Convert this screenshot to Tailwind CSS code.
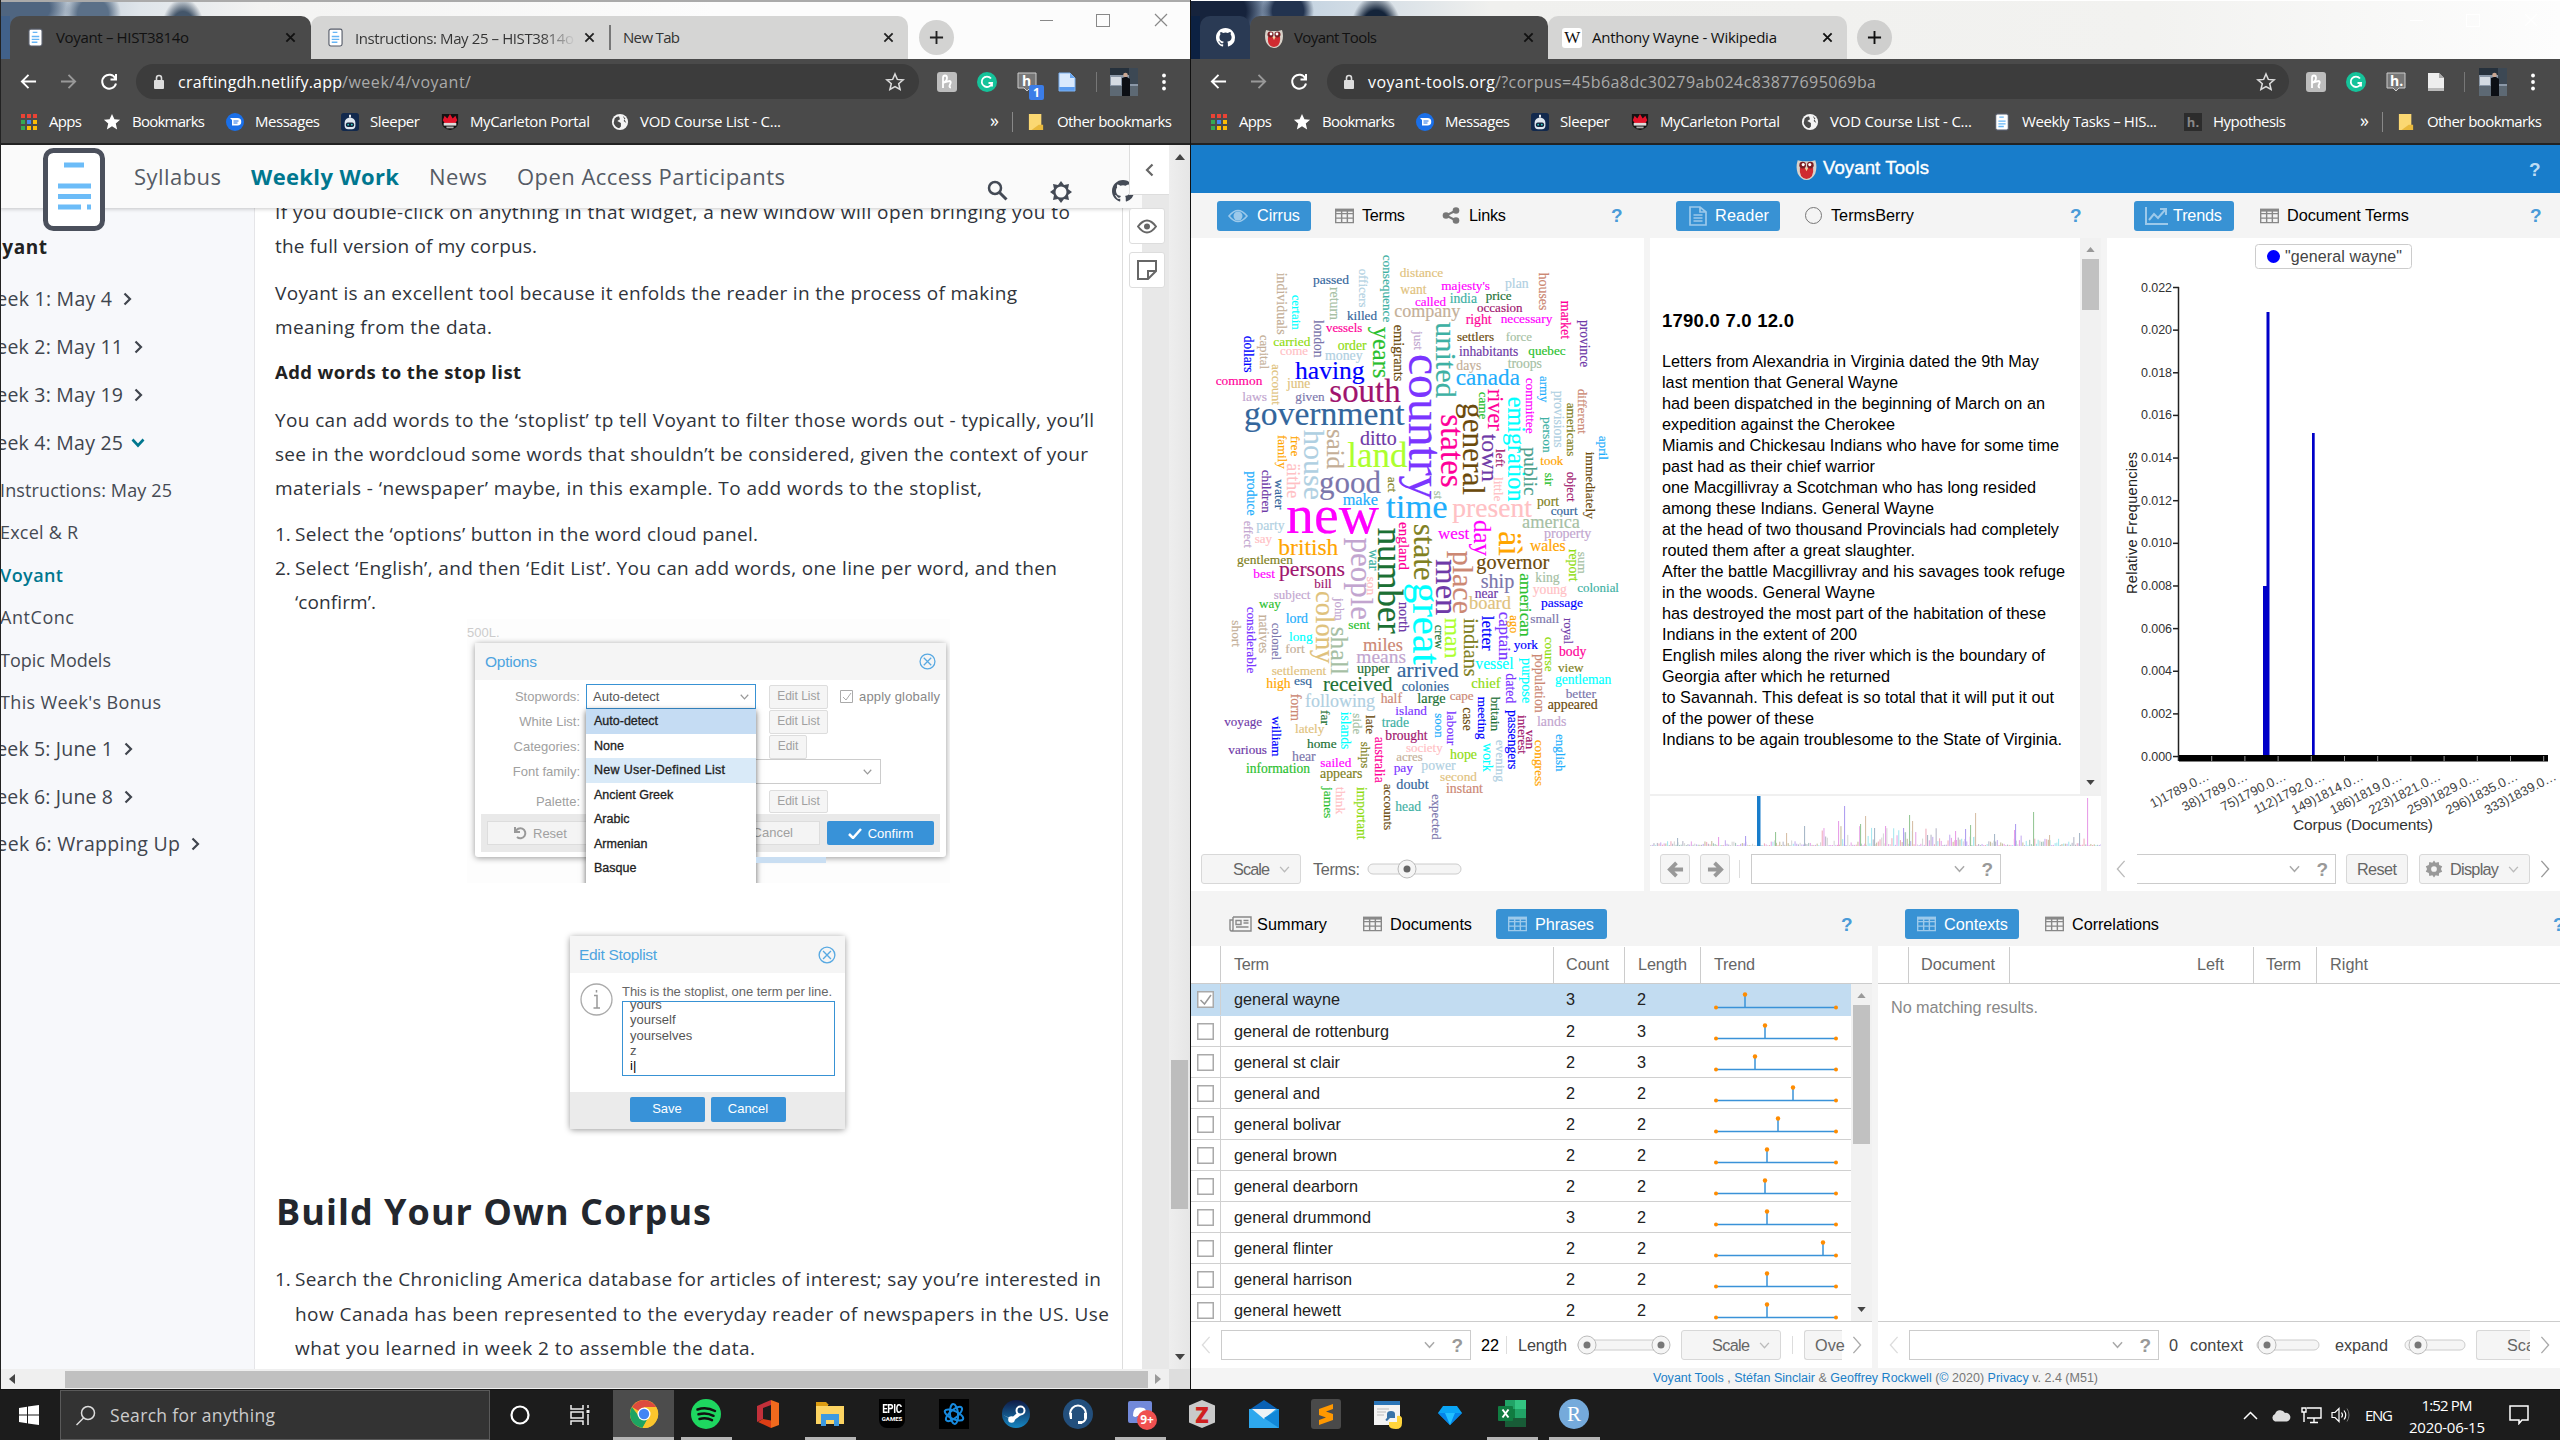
<!DOCTYPE html>
<html lang="en">
<head>
<meta charset="utf-8">
<title>Voyant – HIST3814o</title>
<script src="https://cdn.jsdelivr.net/npm/@tailwindcss/browser@4"></script>
</head>
<body class="w-[2560px] h-[1440px] overflow-hidden bg-[#1c1c1c] flex flex-col font-['Liberation_Sans',sans-serif] leading-none whitespace-nowrap">
<svg class="hidden">
  <symbol id="x" viewBox="0 0 12 12"><path d="M1.5 1.5l9 9M10.5 1.5l-9 9" stroke="currentColor" stroke-width="2" fill="none"/></symbol>
  <symbol id="plus" viewBox="0 0 16 16"><path d="M8 1v14M1 8h14" stroke="currentColor" stroke-width="2"/></symbol>
  <symbol id="doc" viewBox="0 0 16 20"><rect x="1" y="1" width="14" height="18" rx="2" fill="#fff" stroke="#555b68" stroke-width="1.2"/><path d="M5 4.500h5M4 9h8M4 12h8M4 15h6" stroke="#66b5f5" stroke-width="1.500"/></symbol>
  <symbol id="back" viewBox="0 0 18 18"><path d="M17 9H2M9 2L2 9l7 7" stroke="currentColor" stroke-width="2" fill="none"/></symbol>
  <symbol id="fwd" viewBox="0 0 18 18"><path d="M1 9h15M9 2l7 7-7 7" stroke="currentColor" stroke-width="2" fill="none"/></symbol>
  <symbol id="reload" viewBox="0 0 18 18"><path d="M15.500 5.500A7 7 0 1 0 16 10.500M16 1v5.500h-5.500" stroke="currentColor" stroke-width="2" fill="none"/></symbol>
  <symbol id="lock" viewBox="0 0 12 16"><rect x="1" y="6" width="10" height="9" rx="1" fill="currentColor"/><path d="M3.500 7V4a2.500 2.500 0 0 1 5 0v3" stroke="currentColor" stroke-width="1.600" fill="none"/></symbol>
  <symbol id="starO" viewBox="0 0 20 20"><path d="M10 2l2.300 5.400 5.900.5-4.500 3.900 1.400 5.700-5.100-3-5.100 3 1.400-5.700L1.800 7.900l5.900-.5z" stroke="currentColor" stroke-width="1.500" fill="none"/></symbol>
  <symbol id="star" viewBox="0 0 20 20"><path d="M10 1l2.700 6 6.300.6-4.800 4.200 1.500 6.400-5.700-3.400-5.700 3.400 1.500-6.400L1 7.600 7.300 7z" fill="#fff"/></symbol>
  <symbol id="dots" viewBox="0 0 4 18"><circle cx="2" cy="2.500" r="1.900" fill="#fff"/><circle cx="2" cy="9" r="1.900" fill="#fff"/><circle cx="2" cy="15.500" r="1.900" fill="#fff"/></symbol>
  <symbol id="honey" viewBox="0 0 20 20"><rect width="20" height="20" rx="3" fill="#bdbdbd"/><path d="M6 16V6q0-2.500 2-2.500T10 6q0 3-4 5 5-2 7-2 1.500.5 0 3.500t1 3" stroke="#fff" stroke-width="1.800" fill="none"/></symbol>
  <symbol id="gram" viewBox="0 0 20 20"><circle cx="10" cy="10" r="10" fill="#15c39a"/><path d="M14 6.500A5.200 5.200 0 1 0 15 11h-3.500M15 11v3.500" stroke="#fff" stroke-width="1.800" fill="none"/></symbol>
  <symbol id="hyp" viewBox="0 0 20 20"><path d="M1 1h18v15h-6l-3 3-3-3H1z" fill="#777" stroke="#ccc"/></symbol>
  <symbol id="page" viewBox="0 0 18 20"><path d="M1 1h11l5 5v13H1z" fill="#eee"/><path d="M12 1v5h5" fill="#aaa"/><path d="M1 16h16v3H1z" fill="#bbb"/></symbol>
  <symbol id="pageB" viewBox="0 0 18 20"><path d="M1 1h11l5 5v13H1z" fill="#d9e9fd"/><path d="M12 1v5h5" fill="#6aa6ee"/><path d="M1 15h16v4H1z" fill="#5b9cf0"/><path d="M1 1h11l5 5v13H1z" fill="none" stroke="#7db2f2"/></symbol>
  <symbol id="avatar" viewBox="0 0 28 28"><clipPath id="av"><circle cx="14" cy="14" r="13.500"/></clipPath><g clip-path="url(#av)"><path d="M0 0h28v28H0z" fill="#8b98a8"/><path d="M0 0h28v7H0z" fill="#26313c"/><path d="M1 9h10v8H1z" fill="#d4dbe3"/><path d="M0 18h28v10H0z" fill="#5d6974"/><path d="M19 0h9v16h-9z" fill="#3c4854"/><circle cx="15.500" cy="7" r="2.300" fill="#caa792"/><path d="M12 10l3-1h2l3 2v17h-8z" fill="#0c0f14"/></g></symbol>
  <symbol id="apps" viewBox="0 0 18 18"><path d="M1 1h4v4H1zM7 1h4v4H7zM13 1h4v4h-4z" fill="#ea4335"/><path d="M1 7h4v4H1z" fill="#34a853"/><path d="M7 7h4v4H7z" fill="#4285f4"/><path d="M13 7h4v4h-4zM7 13h4v4H7zM13 13h4v4h-4z" fill="#fbbc05"/><path d="M1 13h4v4H1z" fill="#34a853"/></symbol>
  <symbol id="msg" viewBox="0 0 18 18"><circle cx="9" cy="9" r="9" fill="#1a6fe8"/><path d="M4 5h7.500a3.500 3.500 0 0 1 0 7.500H6V7z" fill="#fff"/><path d="M7.500 8h5M7.500 10h4" stroke="#1a6fe8"/></symbol>
  <symbol id="sleep" viewBox="0 0 20 20"><rect width="20" height="20" rx="3" fill="#12294d"/><path d="M4 11a6 6 0 0 1 12 0v3a4 4 0 0 1-4 4H8a4 4 0 0 1-4-4z" fill="#dfe7f0"/><rect x="5.500" y="10.500" width="9" height="5" rx="2" fill="#15233d"/><circle cx="8" cy="13" r="1" fill="#34d0c8"/><circle cx="12" cy="13" r="1" fill="#34d0c8"/><path d="M10 5V2" stroke="#fff" stroke-width="2"/></symbol>
  <symbol id="carl" viewBox="0 0 20 20"><path d="M1 1h18v10q0 6-9 8-9-2-9-8z" fill="#111"/><path d="M2 8l2-5 3 3 3-5 3 5 3-3 2 5-2 3H4z" fill="#e3142b"/><path d="M3 11h14v3H3z" fill="#ddd"/><path d="M6 16h8" stroke="#aaa" stroke-width="2"/></symbol>
  <symbol id="globe" viewBox="0 0 20 20"><circle cx="10" cy="10" r="9" fill="#f5f5f5"/><path d="M4 6q3-3 5-2l1 3-3 2 4 2v4l-2 2q-5-2-6-6zM13 3l3 3-2 3 3 2" fill="#4a4a4a"/></symbol>
  <symbol id="fold" viewBox="0 0 18 20"><path d="M1 1h14v18H1z" fill="#fbd872"/><path d="M12 13h5v6H4" fill="#e9b93c"/></symbol>
  <symbol id="github" viewBox="0 0 16 16"><path fill="currentColor" d="M8 0C3.580 0 0 3.580 0 8c0 3.540 2.290 6.530 5.470 7.590.4.070.55-.17.55-.38v-1.490c-2.230.48-2.700-.94-2.700-.94-.36-.92-.89-1.170-.89-1.170-.73-.5.050-.49.050-.49.810.06 1.230.83 1.230.83.72 1.230 1.880.87 2.340.67.070-.52.280-.87.510-1.070-1.780-.2-3.640-.89-3.640-3.950 0-.87.310-1.590.82-2.150-.08-.2-.36-1.020.08-2.120 0 0 .67-.21 2.200.82a7.700 7.700 0 0 1 4 0c1.530-1.040 2.200-.82 2.200-.82.44 1.100.16 1.920.08 2.120.51.560.82 1.270.82 2.150 0 3.070-1.870 3.750-3.650 3.950.29.250.54.730.54 1.480v2.190c0 .21.150.46.550.38A8 8 0 0 0 16 8c0-4.420-3.580-8-8-8z"/></symbol>
  <symbol id="owl" viewBox="0 0 20 20"><path d="M2 2l4 1h8l4-1q2 6 0 12-3 6-8 6T2 14Q0 8 2 2z" fill="#d9d2c9"/><path d="M4 9h12q1 9-6 10Q3 18 4 9z" fill="#cf2b31"/><circle cx="6.500" cy="6.500" r="3" fill="#7a1d22"/><circle cx="13.500" cy="6.500" r="3" fill="#7a1d22"/><circle cx="7" cy="6" r="1.400" fill="#fff"/><circle cx="13" cy="6" r="1.400" fill="#fff"/><path d="M8.500 9h3L10 12z" fill="#f4d9a0"/></symbol>
  <symbol id="grid" viewBox="0 0 20 16"><path d="M.7 1h18.600v14H.7zM.7 5.500h18.600M.7 10.200h18.600M7 1v14M13 1v14" stroke="currentColor" stroke-width="1.500" fill="none"/><path d="M0 .4h20v3H0z" fill="currentColor"/></symbol>
  <symbol id="chev" viewBox="0 0 12 8"><path d="M1 1l5 5.500L11 1" stroke="currentColor" stroke-width="1.600" fill="none"/></symbol>
  <symbol id="chevB" viewBox="0 0 14 10"><path d="M1.500 1.500L7 7.500l5.500-6" stroke="currentColor" stroke-width="2.600" fill="none"/></symbol>
  <symbol id="lt" viewBox="0 0 10 20"><path d="M9 1L1 10l8 9" stroke="currentColor" stroke-width="1.500" fill="none"/></symbol>
  <symbol id="gt" viewBox="0 0 10 20"><path d="M1 1l8 9-8 9" stroke="currentColor" stroke-width="1.500" fill="none"/></symbol>
  <symbol id="gtB" viewBox="0 0 9 14"><path d="M1.500 1.500L7 7l-5.500 5.500" stroke="currentColor" stroke-width="2.200" fill="none"/></symbol>
  <symbol id="xc" viewBox="0 0 16 16"><circle cx="8" cy="8" r="7" stroke="#58a9e2" stroke-width="1.200" fill="none"/><path d="M4.500 4.500l7 7M11.500 4.500l-7 7" stroke="#58a9e2" stroke-width="1.200"/></symbol>
  <symbol id="up" viewBox="0 0 10 6"><path d="M0 6l5-6 5 6z" fill="currentColor"/></symbol>
  <symbol id="dn" viewBox="0 0 10 6"><path d="M0 0l5 6 5-6z" fill="currentColor"/></symbol>
</svg>

<main class="flex h-[1389px] shrink-0">

<!-- ===== left browser window ===== -->
<section class="w-[1190px] h-full flex flex-col bg-white overflow-hidden shrink-0 border-l border-[#222]">
  <div class="-ml-px h-[59px] shrink-0 border-t-2 border-[#aaa] flex items-end bg-[radial-gradient(ellipse_50px_30px_at_20px_6px,#4f6580_60%,transparent),radial-gradient(ellipse_28px_28px_at_93px_12px,#5b7088_55%,transparent),radial-gradient(ellipse_22px_34px_at_183px_30px,#44566a_60%,transparent),linear-gradient(90deg,#9fb0c2_0,#dfe5ea_140px,#f3f3f2_260px,#fcfcfc_60%)] font-['Open_Sans',sans-serif] text-[15px] text-[#111]">
    <div class="w-[10px] h-[43px] bg-[#41618a] shrink-0"></div>
    <div class="w-[301px] h-[43px] rounded-t-[10px] bg-[#4a4a4a] flex items-center shrink-0"><svg class="w-[15px] h-[19px] ml-[18px]"><use href="#doc"/></svg><span class="fit ml-[13px] w-[133px]">Voyant – HIST3814o</span><svg class="size-[11px] ml-[96px]"><use href="#x"/></svg></div>
    <div class="w-[298px] h-[43px] rounded-tl-[10px] bg-[#d5d5d4] flex items-center shrink-0 text-[#444]"><svg class="w-[15px] h-[19px] ml-[17px]"><use href="#doc"/></svg><span class="fit ml-[12px] w-[219px] bg-[linear-gradient(90deg,#333_85%,#ccc)] bg-clip-text text-transparent leading-[20px]">Instructions: May 25 – HIST3814o</span><svg class="size-[11px] ml-[10px] text-[#222]"><use href="#x"/></svg></div>
    <div class="w-[299px] h-[43px] rounded-tr-[10px] bg-[#d5d5d4] flex items-center shrink-0 text-[#333]"><i class="w-[2px] h-[25px] bg-[#777]"></i><span class="fit ml-[12px] w-[57px]">New Tab</span><svg class="size-[11px] ml-[203px] text-[#222]"><use href="#x"/></svg></div>
    <div class="size-[35px] rounded-full bg-[#d3d3d2] ml-[11px] mb-[4px] flex items-center justify-center shrink-0 text-[#222]"><svg class="size-[15px]"><use href="#plus"/></svg></div>
    <div class="self-start flex items-center h-[36px] ml-[86px] text-[#888]"><i class="w-[13px] h-px bg-[#888]"></i><i class="w-[14px] h-[13px] border border-[#888] ml-[43px]"></i><svg class="size-[14px] ml-[44px]" viewBox="0 0 14 14"><path d="M1 1l12 12M13 1L1 13" stroke="#888" stroke-width="1.200"/></svg></div>
  </div>
  <div class="-ml-px h-[43px] pt-[2px] shrink-0 bg-[#4a4a4a] flex items-center text-white font-['Open_Sans',sans-serif] text-[16px]">
    <svg class="size-[17px] ml-[20px]"><use href="#back"/></svg><svg class="size-[17px] ml-[23px] text-[#999]"><use href="#fwd"/></svg><svg class="size-[18px] ml-[23px]"><use href="#reload"/></svg>
    <div class="w-[783px] h-[35px] rounded-full bg-[#3c3c3c] ml-[18px] flex items-center"><svg class="w-[12px] h-[16px] ml-[17px] text-[#ddd]"><use href="#lock"/></svg><span class="fit w-[164px] ml-[13px]">craftingdh.netlify.app</span><span class="fit w-[129px] text-[#aaa]">/week/4/voyant/</span><svg class="size-[20px] ml-[414px] text-[#ddd]"><use href="#starO"/></svg></div>
    <svg class="size-[20px] ml-[18px]"><use href="#honey"/></svg><svg class="size-[20px] ml-[20px]"><use href="#gram"/></svg>
    <div class="relative size-[20px] ml-[20px]"><svg class="size-[20px]"><use href="#hyp"/></svg><b class="absolute left-[5px] top-[2px] text-[14px]">h</b><b class="absolute left-[12px] top-[13px] w-[15px] h-[15px] rounded-[2px] bg-[#3b7de8] text-[12px] text-center leading-[15px]">1</b></div>
    <svg class="w-[18px] h-[20px] ml-[21px]"><use href="#pageB"/></svg><i class="w-px h-[20px] bg-[#777] ml-[20px]"></i><svg class="size-[28px] ml-[13px]"><use href="#avatar"/></svg><svg class="w-[4px] h-[18px] ml-[24px]"><use href="#dots"/></svg>
  </div>
  <div class="-ml-px h-[43px] shrink-0 bg-[#4a4a4a] border-b-2 border-[#222] flex items-center text-white font-['Open_Sans',sans-serif] text-[15px] pl-[20px] gap-[21px] pb-[2px]">
    <div class="flex items-center gap-[11px]"><svg class="size-[18px]"><use href="#apps"/></svg><span class="fit w-[33px]">Apps</span></div>
    <div class="flex items-center gap-[11px]"><svg class="size-[18px]"><use href="#star"/></svg><span class="fit w-[73px]">Bookmarks</span></div>
    <div class="flex items-center gap-[11px]"><svg class="size-[18px]"><use href="#msg"/></svg><span class="fit w-[65px]">Messages</span></div>
    <div class="flex items-center gap-[11px]"><svg class="size-[18px]"><use href="#sleep"/></svg><span class="fit w-[50px]">Sleeper</span></div>
    <div class="flex items-center gap-[11px]"><svg class="size-[18px]"><use href="#carl"/></svg><span class="fit w-[120px]">MyCarleton Portal</span></div>
    <div class="flex items-center gap-[11px]"><svg class="size-[18px]"><use href="#globe"/></svg><span class="fit w-[141px]">VOD Course List - C...</span></div>
    <div class="flex items-center ml-auto mr-[18px] text-[14px]"><span class="text-[18px] pb-[3px]">»</span><i class="w-px h-[20px] bg-[#888] ml-[13px]"></i><svg class="w-[16px] h-[18px] ml-[15px]"><use href="#fold"/></svg><span class="fit w-[115px] ml-[13px] text-[15px]">Other bookmarks</span></div>
  </div>

  <div class="relative flex h-[1224px] shrink-0 -ml-px">
    <div class="w-[1142px] flex flex-col overflow-hidden shrink-0 font-['Open_Sans',sans-serif]">
      <header class="relative z-10 h-[63px] shrink-0 bg-[#fafafa] shadow-[0_1px_4px_rgba(0,0,0,.22)] flex items-start text-[22px] text-[#555b65]">
        <svg class="w-[62px] h-[84px] ml-[43px] mt-[3px] mb-[-24px]" viewBox="0 0 62 84"><rect x="2.500" y="2.500" width="57" height="78" rx="8" fill="#fff" stroke="#4b505c" stroke-width="5"/><g stroke="#6cbcf8" stroke-width="5"><path d="M21 17h20M15 38h33M15 48.500h33M15 59h23M44 59h4"/></g></svg>
        <div class="flex mt-[19px] leading-[24px] ml-[29px]"><span class="fit w-[87px]">Syllabus</span><b class="fit w-[148px] ml-[30px] text-[#00778f]">Weekly Work</b><span class="fit w-[58px] ml-[30px]">News</span><span class="fit w-[268px] ml-[30px]">Open Access Participants</span></div>
        <div class="flex mt-[35px] ml-[202px] text-[#444a55]"><svg class="size-[21px]" viewBox="0 0 21 21"><circle cx="8" cy="8" r="6" stroke="currentColor" stroke-width="2.500" fill="none"/><path d="M12.500 12.500l7 7" stroke="currentColor" stroke-width="3"/></svg><svg class="size-[24px] ml-[41px]" viewBox="0 0 24 24"><path d="M12 1l3 4 5-1-1 5 4 3-4 3 1 5-5-1-3 4-3-4-5 1 1-5-4-3 4-3-1-5 5 1z" fill="currentColor"/><circle cx="12" cy="12" r="5.500" fill="#fafafa"/></svg><svg class="size-[22px] ml-[39px]"><use href="#github"/></svg></div>
      </header>
      <div class="flex h-[1161px]">
        <nav class="w-[255px] shrink-0 bg-[#f7f8fb] border-r border-[#e5e5e8] overflow-hidden text-[19.500px] text-[#40454e] flex flex-col pt-[23px] leading-[32px]">
          <b class="fit w-[70px] ml-[-23px] text-[19px] text-[#222]">Voyant</b>
          <div class="flex items-center mt-[20px] h-[32px]"><span class="fit w-[134px] ml-[-22px]">Week 1: May 4</span><svg class="w-[9px] h-[14px] ml-[11px]"><use href="#gtB"/></svg></div>
          <div class="flex items-center mt-[15.500px] h-[32px]"><span class="fit w-[145px] ml-[-22px]">Week 2: May 11</span><svg class="w-[9px] h-[14px] ml-[11px]"><use href="#gtB"/></svg></div>
          <div class="flex items-center mt-[16px] h-[32px]"><span class="fit w-[145px] ml-[-22px]">Week 3: May 19</span><svg class="w-[9px] h-[14px] ml-[11px]"><use href="#gtB"/></svg></div>
          <div class="flex items-center mt-[16px] h-[32px]"><span class="fit w-[145px] ml-[-22px]">Week 4: May 25</span><svg class="w-[14px] h-[10px] ml-[8px] text-[#00778f]"><use href="#chevB"/></svg></div>
          <div class="text-[18px] mt-[10.500px] leading-[42.400px] flex flex-col text-[#454a53]">
            <span class="fit w-[172px]">Instructions: May 25</span><span class="fit w-[78px]">Excel &amp; R</span><b class="fit w-[63px] font-semibold text-[#00778f]">Voyant</b><span class="fit w-[74px]">AntConc</span><span class="fit w-[111px]">Topic Models</span><span class="fit w-[161px]">This Week's Bonus</span>
          </div>
          <div class="flex items-center mt-[10px] h-[32px]"><span class="fit w-[135px] ml-[-22px]">Week 5: June 1</span><svg class="w-[9px] h-[14px] ml-[11px]"><use href="#gtB"/></svg></div>
          <div class="flex items-center mt-[15.500px] h-[32px]"><span class="fit w-[135px] ml-[-22px]">Week 6: June 8</span><svg class="w-[9px] h-[14px] ml-[11px]"><use href="#gtB"/></svg></div>
          <div class="flex items-center mt-[15.500px] h-[32px]"><span class="fit w-[202px] ml-[-22px]">Week 6: Wrapping Up</span><svg class="w-[9px] h-[14px] ml-[11px]"><use href="#gtB"/></svg></div>
        </nav>
        <article class="w-[868px] h-full overflow-hidden border-r border-[#ddd] pl-[20px] text-[19px] leading-[34.200px] text-[#30343b] flex flex-col shrink-0">
          <div class="mt-[-13px] flex flex-col shrink-0"><span class="fit w-[795px]">If you double-click on anything in that widget, a new window will open bringing you to</span><span class="fit w-[262px]">the full version of my corpus.</span></div>
          <div class="mt-[12.600px] flex flex-col shrink-0"><span class="fit w-[742px]">Voyant is an excellent tool because it enfolds the reader in the process of making</span><span class="fit w-[217px]">meaning from the data.</span></div>
          <b class="fit mt-[11px] w-[246px] text-[18.500px] text-[#222] shrink-0">Add words to the stop list</b>
          <div class="mt-[13px] flex flex-col shrink-0"><span class="fit w-[819px]">You can add words to the ‘stoplist’ tp tell Voyant to filter those words out - typically, you’ll</span><span class="fit w-[813px]">see in the wordcloud some words that shouldn’t be considered, given the context of your</span><span class="fit w-[707px]">materials - ‘newspaper’ maybe, in this example. To add words to the stoplist,</span></div>
          <div class="mt-[11.500px] flex flex-col shrink-0"><div class="flex"><span class="w-[20px]">1.</span><span class="fit w-[463px]">Select the ‘options’ button in the word cloud panel.</span></div><div class="flex"><span class="w-[20px]">2.</span><span class="fit w-[762px]">Select ‘English’, and then ‘Edit List’. You can add words, one line per word, and then</span></div><span class="fit ml-[20px] w-[81px]">‘confirm’.</span></div>

          <!-- options dialog illustration -->
          <div class="relative ml-[192px] w-[483px] h-[264px] shrink-0 overflow-hidden bg-[#fdfdfd] font-['Liberation_Sans',sans-serif] text-[13px] leading-none text-[#a0a0a0]">
            <div class="pt-[7px] text-[13px] text-[#ccc] h-[24px]">500L.</div>
            <div class="ml-[8px] w-[471px] h-[214px] bg-white shadow-[0_1px_6px_rgba(0,0,0,.4)] rounded-[3px] flex flex-col">
              <div class="h-[37px] bg-[#f5f5f5] flex items-center justify-between px-[10px] text-[15.500px] text-[#4da4e0] shrink-0"><span class="fit w-[52px]">Options</span><svg class="size-[17px]"><use href="#xc"/></svg></div>
              <div class="flex mt-[4px] h-[25px] items-center"><span class="w-[105px] text-right">Stopwords:</span><div class="ml-[6px] w-[170px] h-[25px] border border-[#3892d4] flex items-center justify-between px-[6px] text-[#555]"><span>Auto-detect</span><svg class="w-[9px] h-[6px] text-[#999]"><use href="#chev"/></svg></div><span class="ml-[13px] w-[59px] h-[24px] border border-[#ddd] bg-[#f5f5f5] rounded-[2px] text-center text-[12px] leading-[21px]">Edit List</span><svg class="ml-[12px] size-[13px]" viewBox="0 0 13 13"><path d="M.5.5h12v12H.5zM3 7l3 3 5-7" stroke="#aaa" fill="none"/></svg><span class="ml-[6px] fit w-[81px] text-[#888]">apply globally</span></div>
              <div class="flex h-[25px] items-center"><span class="w-[105px] text-right">White List:</span><span class="ml-[189px] w-[59px] h-[24px] border border-[#ddd] bg-[#f5f5f5] rounded-[2px] text-center text-[12px] leading-[21px]">Edit List</span></div>
              <div class="flex h-[25px] items-center"><span class="w-[105px] text-right">Categories:</span><span class="ml-[189px] w-[38px] h-[24px] border border-[#ddd] bg-[#f5f5f5] rounded-[2px] text-center text-[12px] leading-[21px]">Edit</span></div>
              <div class="flex h-[25px] items-center"><span class="w-[105px] text-right">Font family:</span><div class="ml-[6px] w-[295px] h-[25px] border border-[#ccc] flex items-center justify-end px-[8px]"><svg class="w-[9px] h-[6px] text-[#999]"><use href="#chev"/></svg></div></div>
              <div class="flex h-[25px] items-center mt-[5px]"><span class="w-[105px] text-right">Palette:</span><span class="ml-[189px] w-[59px] h-[23px] border border-[#ddd] bg-[#f5f5f5] rounded-[2px] text-center text-[12px] leading-[21px]">Edit List</span></div>
              <div class="mx-[6px] h-[38px] bg-[#e9e9e9] flex items-center px-[6px] text-[13px]"><div class="w-[110px] h-[24px] bg-[#f4f4f4] border border-[#ddd] flex items-center pl-[25px] gap-[6px]"><svg class="size-[14px]" viewBox="0 0 14 14"><path d="M2 1v5h5M2.500 6A5 5 0 1 1 4 11" stroke="#999" stroke-width="2" fill="none"/></svg>Reset</div><div class="ml-[10px] flex-1 h-[24px] bg-[#f4f4f4] border border-[#ddd] text-right pr-[26px] leading-[22px]">Cancel</div><div class="ml-[7px] w-[107px] h-[24px] bg-[#3892d8] text-white rounded-[2px] flex items-center justify-center gap-[6px]"><svg class="w-[14px] h-[11px]" viewBox="0 0 14 11"><path d="M1 6l4 4 8-9" stroke="#fff" stroke-width="2.500" fill="none"/></svg>Confirm</div></div>
            </div>
            <div class="absolute left-[119px] top-[90px] w-[170px] h-[180px] bg-white shadow-[0_2px_6px_rgba(0,0,0,.6)] text-[#222] text-[12.500px] leading-[24.500px] flex flex-col [-webkit-text-stroke:.3px_#222]"><span class="bg-[#c5dcf3] pl-[8px]">Auto-detect</span><span class="pl-[8px]">None</span><span class="bg-[#d9eaf8] pl-[8px]"><span class="fit inline-block w-[131px]">New User-Defined List</span></span><span class="pl-[8px]">Ancient Greek</span><span class="pl-[8px]">Arabic</span><span class="pl-[8px]">Armenian</span><span class="pl-[8px]">Basque</span></div>
            <div class="absolute left-[289px] top-[238px] w-[70px] h-[6px] bg-[#c9def2]"></div>
          </div>

          <!-- stoplist dialog illustration -->
          <div class="ml-[295px] mt-[53px] w-[275px] h-[193px] shrink-0 bg-white shadow-[0_1px_6px_rgba(0,0,0,.4)] rounded-[3px] flex flex-col font-['Liberation_Sans',sans-serif] text-[13px] leading-none text-[#666]">
            <div class="h-[37px] bg-[#f5f5f5] flex items-center justify-between px-[9px] text-[15.500px] text-[#4da4e0] shrink-0"><span class="fit w-[78px]">Edit Stoplist</span><svg class="size-[18px]"><use href="#xc"/></svg></div>
            <div class="flex h-[119px] pt-[10px]"><svg class="size-[33px] ml-[10px]" viewBox="0 0 33 33"><circle cx="16.500" cy="16.500" r="15.500" stroke="#aaa" fill="none" stroke-width="1.300"/><path d="M14 12.500h3V25M13.500 25h6.500M16.500 7v2.500" stroke="#999" fill="none" stroke-width="1.500"/></svg>
            <div class="ml-[9px]"><div class="fit w-[210px] h-[18px] pt-[2px]">This is the stoplist, one term per line.</div><div class="w-[213px] h-[75px] border border-[#3892d4] overflow-hidden pl-[7px] leading-[15.100px] text-[#555]"><div class="mt-[-5px]">yours</div><div>yourself</div><div>yourselves</div><div>z</div><div class="text-black">i|</div></div></div></div>
            <div class="flex-1 bg-[#ebebeb] flex justify-center items-start pt-[5px] gap-[6px] text-white"><span class="w-[75px] h-[25px] bg-[#3892d8] rounded-[2px] text-center leading-[24px]">Save</span><span class="w-[75px] h-[25px] bg-[#3892d8] rounded-[2px] text-center leading-[24px]">Cancel</span></div>
          </div>
          <b class="fit ml-px mt-[61px] w-[435px] text-[36px] leading-[44px] text-[#23272e] shrink-0">Build Your Own Corpus</b>
          <div class="mt-[28px] flex flex-col shrink-0"><div class="flex"><span class="w-[20px]">1.</span><span class="fit w-[806px]">Search the Chronicling America database for articles of interest; say you’re interested in</span></div><span class="fit ml-[20px] w-[814px]">how Canada has been represented to the everyday reader of newspapers in the US. Use</span><span class="fit ml-[20px] w-[460px]">what you learned in week 2 to assemble the data.</span></div>
        </article>
      </div>
    </div>
    <div class="w-[27px] bg-[#e8e8e8] shrink-0"></div>
    <div class="w-[21px] bg-[linear-gradient(90deg,#eee,#e6e6e6)] flex flex-col items-center text-[#444] pt-[9px]"><svg class="w-[10px] h-[6px]"><use href="#up"/></svg><div class="mt-[900px] w-[17px] h-[149px] bg-[#bdbdbd]"></div><svg class="w-[10px] h-[6px] mt-auto mb-[9px]"><use href="#dn"/></svg></div>
    <div class="absolute z-20 left-[1129px] top-0 w-[40px] h-[50px] bg-white border-b border-l border-[#ddd] flex items-center justify-center text-[#666]"><svg class="w-[9px] h-[14px] rotate-180"><use href="#gtB"/></svg></div>
    <div class="absolute z-20 left-[1129px] top-[63px] size-[36px] bg-white border border-[#ddd] rounded-[3px] flex items-center justify-center"><svg class="w-[20px] h-[15px]" viewBox="0 0 20 15"><path d="M1 7.500Q10-4.500 19 7.500Q10 19.500 1 7.500z" fill="none" stroke="#666" stroke-width="2"/><circle cx="10" cy="7.500" r="3" fill="#666"/></svg></div>
    <div class="absolute z-20 left-[1129px] top-[107px] size-[36px] bg-white border border-[#ddd] rounded-[3px] flex items-center justify-center"><svg class="size-[20px]" viewBox="0 0 20 20"><path d="M1 1h18v10l-8 8H1zM11 19v-8h8" fill="none" stroke="#666" stroke-width="2"/></svg></div>
  </div>
  <div class="h-[20px] bg-[#efefef] flex items-center shrink-0 text-[#444]"><svg class="w-[10px] h-[6px] ml-[6px] -rotate-90"><use href="#up"/></svg><div class="ml-[48px] w-[1083px] h-[17px] bg-[#c0c0c0]"></div><svg class="w-[10px] h-[6px] ml-[5px] rotate-90 text-[#999]"><use href="#up"/></svg><div class="ml-auto w-[21px] h-[20px] bg-[#ddd]"></div></div>
</section>

<!-- ===== right browser window ===== -->
<section class="w-[1370px] h-full flex flex-col bg-[#f4f4f4] overflow-hidden shrink-0 border-l border-[#111]">
  <div class="-ml-px h-[59px] shrink-0 border-t border-white flex items-end bg-[radial-gradient(ellipse_60px_40px_at_20px_10px,#16233c_60%,transparent),radial-gradient(ellipse_26px_26px_at_98px_10px,#22334f_60%,transparent),radial-gradient(ellipse_26px_38px_at_186px_32px,#14243a_60%,transparent),linear-gradient(90deg,#54749f_0,#c7d5e2_120px,#f0f0ee_300px,#f2f2f0_70%,#fdfdfd)] font-['Open_Sans',sans-serif] text-[15px] text-[#111]">
    <div class="w-[10px] h-[43px] bg-[#0c2142] shrink-0"></div>
    <div class="w-[50px] h-[43px] rounded-t-[10px] bg-[#2a3a54] flex items-center justify-center shrink-0 text-white"><svg class="size-[19px]"><use href="#github"/></svg></div>
    <div class="w-[298px] h-[43px] rounded-t-[10px] bg-[#4a4a4a] flex items-center shrink-0"><svg class="size-[20px] ml-[14px]"><use href="#owl"/></svg><span class="fit ml-[10px] w-[83px]">Voyant Tools</span><svg class="size-[11px] ml-[146px]"><use href="#x"/></svg></div>
    <div class="w-[299px] h-[43px] rounded-t-[10px] bg-[#d5d5d4] flex items-center shrink-0"><span class="ml-[14px] w-[20px] h-[20px] bg-white rounded-[3px] font-['Liberation_Serif',serif] text-[17px] leading-[20px] text-center tracking-tight">W</span><span class="fit ml-[10px] w-[185px]">Anthony Wayne - Wikipedia</span><svg class="size-[11px] ml-[45px]"><use href="#x"/></svg></div>
    <div class="size-[35px] rounded-full bg-[#cfcfce] ml-[10px] mb-[4px] flex items-center justify-center shrink-0"><svg class="size-[15px]"><use href="#plus"/></svg></div>
    <div class="self-start flex items-center h-[38px] ml-[518px]"><i class="w-[13px] h-px bg-white"></i><i class="w-[14px] h-[13px] border border-white ml-[43px]"></i><svg class="size-[14px] ml-[44px]" viewBox="0 0 14 14"><path d="M1 1l12 12M13 1L1 13" stroke="#fff" stroke-width="1.200"/></svg></div>
  </div>
  <div class="-ml-px h-[43px] pt-[2px] shrink-0 bg-[#4a4a4a] flex items-center text-white font-['Open_Sans',sans-serif] text-[16px]">
    <svg class="size-[17px] ml-[20px]"><use href="#back"/></svg><svg class="size-[17px] ml-[23px] text-[#999]"><use href="#fwd"/></svg><svg class="size-[18px] ml-[23px]"><use href="#reload"/></svg>
    <div class="w-[962px] h-[35px] rounded-full bg-[#3c3c3c] ml-[19px] flex items-center"><svg class="w-[12px] h-[16px] ml-[16px] text-[#ddd]"><use href="#lock"/></svg><span class="fit w-[127px] ml-[13px]">voyant-tools.org</span><span class="fit w-[381px] text-[#aaa]">/?corpus=45b6a8dc30279ab024c83877695069ba</span><svg class="size-[20px] ml-[380px] text-[#ddd]"><use href="#starO"/></svg></div>
    <svg class="size-[20px] ml-[17px]"><use href="#honey"/></svg><svg class="size-[20px] ml-[20px]"><use href="#gram"/></svg>
    <div class="relative size-[20px] ml-[20px]"><svg class="size-[20px]"><use href="#hyp"/></svg><b class="absolute left-[4px] top-[2px] text-[14px]">h.</b></div>
    <svg class="w-[18px] h-[20px] ml-[21px]"><use href="#page"/></svg><i class="w-px h-[20px] bg-[#777] ml-[19px]"></i><svg class="size-[28px] ml-[14px]"><use href="#avatar"/></svg><svg class="w-[4px] h-[18px] ml-[24px]"><use href="#dots"/></svg>
  </div>
  <div class="-ml-px h-[43px] shrink-0 bg-[#4a4a4a] border-b-2 border-[#222] flex items-center text-white font-['Open_Sans',sans-serif] text-[15px] pl-[20px] gap-[21px] pb-[2px]">
    <div class="flex items-center gap-[11px]"><svg class="size-[18px]"><use href="#apps"/></svg><span class="fit w-[33px]">Apps</span></div>
    <div class="flex items-center gap-[11px]"><svg class="size-[18px]"><use href="#star"/></svg><span class="fit w-[73px]">Bookmarks</span></div>
    <div class="flex items-center gap-[11px]"><svg class="size-[18px]"><use href="#msg"/></svg><span class="fit w-[65px]">Messages</span></div>
    <div class="flex items-center gap-[11px]"><svg class="size-[18px]"><use href="#sleep"/></svg><span class="fit w-[50px]">Sleeper</span></div>
    <div class="flex items-center gap-[11px]"><svg class="size-[18px]"><use href="#carl"/></svg><span class="fit w-[120px]">MyCarleton Portal</span></div>
    <div class="flex items-center gap-[11px]"><svg class="size-[18px]"><use href="#globe"/></svg><span class="fit w-[142px]">VOD Course List - C...</span></div>
    <div class="flex items-center gap-[11px]"><svg class="size-[18px]"><use href="#doc"/></svg><span class="fit w-[135px]">Weekly Tasks – HIS...</span></div>
    <div class="flex items-center gap-[11px] ml-[6px]"><b class="w-[18px] h-[18px] bg-[#2c2c2c] text-[#888] text-[13px] leading-[18px] text-center">h.</b><span class="fit w-[73px]">Hypothesis</span></div>
    <div class="flex items-center ml-auto mr-[18px] text-[14px]"><span class="text-[18px] pb-[3px]">»</span><i class="w-px h-[20px] bg-[#888] ml-[13px]"></i><svg class="w-[16px] h-[18px] ml-[15px]"><use href="#fold"/></svg><span class="fit w-[115px] ml-[13px] text-[15px]">Other bookmarks</span></div>
  </div>

  <div class="h-[48px] shrink-0 bg-[#187dcb] flex items-center text-white text-[18.500px]"><svg class="w-[23px] h-[22px] ml-[604px]"><use href="#owl"/></svg><span class="fit ml-[5px] mb-[1px] w-[106px] [-webkit-text-stroke:.4px_#fff]">Voyant Tools</span><b class="ml-[600px] text-[19px] text-[#bcdcf4]">?</b></div>

  <!-- upper panels -->
  <div class="flex gap-[6px] h-[698px] shrink-0 text-[16.250px]">
    <div class="w-[453px] flex flex-col">
      <div class="h-[45px] flex items-center shrink-0"><div class="ml-[26px] w-[94px] h-[30px] bg-[#3892d4] rounded-[3px] flex items-center text-white"><svg class="w-[20px] h-[14px] ml-[11px]" viewBox="0 0 20 14"><path d="M1 7Q10-4 19 7Q10 18 1 7z" fill="none" stroke="#9cc9ea" stroke-width="1.600"/><circle cx="10" cy="7" r="4.500" fill="#9cc9ea"/></svg><span class="fit ml-[9px] w-[43px]">Cirrus</span></div>
      <svg class="w-[19px] h-[16px] ml-[24px] text-[#888]"><use href="#grid"/></svg><span class="fit ml-[8px] w-[43px]">Terms</span>
      <svg class="w-[18px] h-[17px] ml-[37px]" viewBox="0 0 18 17"><path d="M14 3.500L4 8.500l10 5" stroke="#777" stroke-width="2" fill="none"/><circle cx="14" cy="3.500" r="3.300" fill="#777"/><circle cx="4" cy="8.500" r="3.300" fill="#777"/><circle cx="14" cy="13.500" r="3.300" fill="#777"/></svg><span class="fit ml-[9px] w-[37px]">Links</span><b class="ml-[105px] text-[19px] text-[#4a9bd8]">?</b></div>
      <div class="flex-1 bg-white flex flex-col"><svg id="cloud" class="w-[453px] h-[608px] shrink-0" viewBox="3 24 1359 1824" font-family="'Palatino Linotype','Liberation Serif',serif"></svg>
        <div class="flex items-center h-[30px] mt-[8px] text-[#666]"><div class="ml-[10px] w-[100px] h-[30px] border border-[#d8d8d8] bg-[#f5f5f5] rounded-[3px] flex items-center"><span class="fit ml-[31px] w-[37px]">Scale</span><svg class="w-[11px] h-[7px] ml-[9px] text-[#bbb]"><use href="#chev"/></svg></div><span class="fit w-[47px] ml-[12px]">Terms:</span>
        <svg class="w-[96px] h-[22px] ml-[7px]" viewBox="0 0 96 22"><rect x="1" y="6" width="93" height="10" rx="5" fill="#f5f5f5" stroke="#ccc"/><circle cx="40" cy="11" r="9" fill="#f5f5f5" stroke="#bbb"/><circle cx="40" cy="11" r="3.500" fill="#666"/></svg></div>
      </div>
    </div>
    <div class="w-[451px] flex flex-col">
      <div class="h-[45px] flex items-center shrink-0"><div class="ml-[26px] w-[104px] h-[30px] bg-[#3892d4] rounded-[3px] flex items-center text-white"><svg class="w-[18px] h-[20px] ml-[13px]" viewBox="0 0 18 20"><path d="M1 1h10l6 5v13H1zM11 1v5h6M4.500 9h9M4.500 12h9M4.500 15h9" fill="none" stroke="#9cc9ea" stroke-width="1.700"/></svg><span class="fit ml-[8px] w-[54px]">Reader</span></div>
      <i class="ml-[25px] size-[17px] rounded-full border-[1.500px] border-[#777]"></i><span class="fit ml-[9px] w-[83px]">TermsBerry</span><b class="ml-[156px] text-[19px] text-[#4a9bd8]">?</b></div>
      <div class="flex h-[556px] bg-white">
        <div class="flex-1 pl-[12px] flex flex-col text-[16.250px] leading-[21px] text-black">
          <b class="fit w-[132px] text-[18.500px] mt-[72px] mb-[20px]">1790.0 7.0 12.0</b>
          <div id="reader" class="flex flex-col"></div>
        </div>
        <div class="w-[21px] bg-[#f1f1f1] flex flex-col items-center text-[#999] pt-[9px]"><svg class="w-[9px] h-[5px]"><use href="#up"/></svg><div class="w-[17px] h-[51px] bg-[#c1c1c1] mt-[7px]"></div><svg class="w-[9px] h-[5px] mt-auto mb-[9px] text-[#444]"><use href="#dn"/></svg></div>
      </div>
      <svg id="hist" class="w-[451px] h-[52px] bg-white border-t-2 border-[#f0f0f0] shrink-0" viewBox="0 0 451 50"></svg>
      <div class="flex-1 bg-white flex items-start pt-[8px] text-[#aaa]">
        <div class="ml-[10px] size-[30px] border border-[#d8d8d8] bg-[#f5f5f5] rounded-[3px] flex items-center justify-center"><svg class="size-[17px]" viewBox="0 0 18 18"><path d="M17 9H4M10 2L3 9l7 7" stroke="#999" stroke-width="4" fill="none"/></svg></div>
        <div class="ml-[10px] size-[30px] border border-[#d8d8d8] bg-[#f5f5f5] rounded-[3px] flex items-center justify-center"><svg class="size-[17px]" viewBox="0 0 18 18"><path d="M1 9h13M8 2l7 7-7 7" stroke="#999" stroke-width="4" fill="none"/></svg></div>
        <i class="w-px h-[18px] bg-[#ddd] ml-[9px] mt-[6px]"></i>
        <div class="ml-[11px] w-[250px] h-[30px] border border-[#ccc] flex items-center justify-end"><svg class="w-[11px] h-[8px]"><use href="#chev"/></svg><b class="ml-[16px] mr-[7px] text-[19px] text-[#999]">?</b></div>
      </div>
    </div>
    <div class="flex-1 flex flex-col">
      <div class="h-[45px] flex items-center shrink-0"><div class="ml-[27px] w-[100px] h-[30px] bg-[#3892d4] rounded-[3px] flex items-center text-white"><svg class="w-[23px] h-[18px] ml-[11px]" viewBox="0 0 23 18"><path d="M1 0v17h22M4 13l5-6 4 4 7-8M15 2h6v6" fill="none" stroke="#9cc9ea" stroke-width="2"/></svg><span class="fit ml-[5px] w-[49px]">Trends</span></div>
      <svg class="w-[19px] h-[16px] ml-[26px] text-[#888]"><use href="#grid"/></svg><span class="fit ml-[8px] w-[122px]">Document Terms</span><b class="ml-[121px] text-[19px] text-[#4a9bd8]">?</b></div>
      <div class="flex-1 bg-white flex flex-col">
        <svg id="trend" class="w-[453px] h-[608px] shrink-0" viewBox="2107 238 453 608" font-family="'Liberation Sans',sans-serif"></svg>
        <div class="flex items-center h-[30px] mt-[8px] text-[#666]"><svg class="w-[10px] h-[18px] ml-[9px] text-[#bbb]"><use href="#lt"/></svg><div class="ml-[11px] w-[199px] h-[30px] border border-l-0 border-[#ccc] flex items-center justify-end text-[#aaa]"><svg class="w-[11px] h-[8px]"><use href="#chev"/></svg><b class="ml-[16px] mr-[7px] text-[19px] text-[#999]">?</b></div>
        <div class="ml-[10px] w-[62px] h-[30px] border border-[#d8d8d8] bg-[#f5f5f5] rounded-[3px] flex items-center justify-center"><span class="fit w-[40px]">Reset</span></div>
        <div class="ml-[11px] w-[111px] h-[30px] border border-[#d8d8d8] bg-[#f5f5f5] rounded-[3px] flex items-center"><svg class="size-[18px] ml-[5px]" viewBox="0 0 22 22"><path d="M11 .5l2 3 3.800-1 .500 3.700 3.700 1.300L19.500 11l1.500 3.500-3.700 1.300-.5 3.700-3.800-1-2 3-2-3-3.800 1-.5-3.700L1 14.500 2.500 11 1 7.500l3.700-1.300.5-3.700 3.800 1z" fill="#999"/><circle cx="11" cy="11" r="3.500" fill="#f5f5f5"/></svg><span class="fit w-[49px] ml-[7px]">Display</span><svg class="w-[11px] h-[7px] ml-[9px] text-[#bbb]"><use href="#chev"/></svg></div><svg class="w-[10px] h-[18px] ml-[10px] text-[#999]"><use href="#gt"/></svg></div>
      </div>
    </div>
  </div>

  <!-- lower panels -->
  <div class="flex gap-[6px] h-[477px] shrink-0 text-[16.250px]">
    <div class="w-[681px] flex flex-col">
      <div class="h-[55px] flex items-center shrink-0 pt-[11px]"><div class="h-[30px] flex items-center"><svg class="w-[23px] h-[16px] ml-[38px]" viewBox="0 0 23 16"><path d="M4 1h18v14H2.500Q1 15 1 13V4h3M4 1v12q0 2-1.500 2M7 4.500h5v4H7zM14.500 4.500h5M14.500 7h5M7 11h12.500" fill="none" stroke="#888" stroke-width="1.400"/></svg><span class="fit ml-[5px] w-[70px]">Summary</span><svg class="w-[19px] h-[16px] ml-[36px] text-[#888]"><use href="#grid"/></svg><span class="fit ml-[8px] w-[82px]">Documents</span>
      <div class="ml-[24px] w-[111px] h-[30px] bg-[#3892d4] rounded-[3px] flex items-center text-white"><svg class="w-[19px] h-[16px] ml-[12px] text-[#9cc9ea]"><use href="#grid"/></svg><span class="fit ml-[8px] w-[59px]">Phrases</span></div><b class="ml-[234px] text-[19px] text-[#4a9bd8]">?</b></div></div>
      <div class="h-[38px] bg-white border-b border-[#ccc] flex items-center text-[#666] shrink-0"><div class="w-[30px] h-[36px] border-r border-[#ccc] mb-px"></div><div class="w-[333px] h-[36px] border-r border-[#ccc] flex items-center"><span class="fit ml-[13px] w-[35px]">Term</span></div><div class="w-[71px] h-[36px] border-r border-[#ccc] flex items-center"><span class="fit ml-[12px] w-[43px]">Count</span></div><div class="w-[76px] h-[36px] border-r border-[#ccc] flex items-center"><span class="fit ml-[13px] w-[49px]">Length</span></div><span class="fit ml-[13px] w-[41px]">Trend</span></div>
      <div class="flex h-[338px] bg-white border-b border-[#ccc] shrink-0">
        <div id="rows" class="w-[660px] overflow-hidden"></div>
        <div class="w-[21px] bg-[#f1f1f1] flex flex-col items-center text-[#999] pt-[9px]"><svg class="w-[9px] h-[5px]"><use href="#up"/></svg><div class="w-[17px] h-[139px] bg-[#c1c1c1] mt-[7px]"></div><svg class="w-[9px] h-[5px] mt-auto mb-[9px] text-[#444]"><use href="#dn"/></svg></div>
      </div>
      <div class="flex-1 bg-white flex items-center overflow-hidden text-[#444]"><svg class="w-[10px] h-[18px] ml-[10px] text-[#ddd]"><use href="#lt"/></svg><div class="ml-[10px] w-[250px] h-[30px] border border-[#ccc] flex items-center justify-end text-[#aaa]"><svg class="w-[11px] h-[8px]"><use href="#chev"/></svg><b class="ml-[16px] mr-[7px] text-[19px] text-[#999]">?</b></div><span class="ml-[10px] w-[18px] text-black">22</span><i class="w-px h-[18px] bg-[#ddd] ml-[7px]"></i><span class="fit ml-[11px] w-[49px]">Length</span>
        <svg class="w-[94px] h-[22px] ml-[10px]" viewBox="0 0 94 22"><rect x="1" y="6" width="91" height="10" rx="5" fill="#f5f5f5" stroke="#ccc"/><g fill="#f5f5f5" stroke="#bbb"><circle cx="10" cy="11" r="9"/><circle cx="84" cy="11" r="9"/></g><circle cx="10" cy="11" r="3.500" fill="#777"/><circle cx="84" cy="11" r="3.500" fill="#777"/></svg>
        <div class="ml-[10px] w-[100px] h-[30px] border border-[#d8d8d8] bg-[#f5f5f5] rounded-[3px] flex items-center text-[#666] shrink-0"><span class="fit ml-[30px] w-[38px]">Scale</span><svg class="w-[11px] h-[7px] ml-[9px] text-[#bbb]"><use href="#chev"/></svg></div><i class="w-px h-[18px] bg-[#ddd] ml-[11px]"></i><div class="ml-[11px] w-[38px] h-[30px] border border-r-0 border-[#d8d8d8] bg-[#f5f5f5] rounded-l-[3px] flex items-center pl-[10px] text-[#666] shrink-0">Ove</div><svg class="w-[10px] h-[18px] ml-[10px] text-[#aaa] shrink-0"><use href="#gt"/></svg></div>
    </div>
    <div class="flex-1 flex flex-col">
      <div class="h-[55px] flex items-center shrink-0 pt-[11px]"><div class="h-[30px] flex items-center"><div class="ml-[27px] w-[114px] h-[30px] bg-[#3892d4] rounded-[3px] flex items-center text-white"><svg class="w-[19px] h-[16px] ml-[12px] text-[#9cc9ea]"><use href="#grid"/></svg><span class="fit ml-[8px] w-[64px]">Contexts</span></div><svg class="w-[19px] h-[16px] ml-[26px] text-[#888]"><use href="#grid"/></svg><span class="fit ml-[8px] w-[87px]">Correlations</span><b class="ml-[394px] text-[19px] text-[#4a9bd8]">?</b></div></div>
      <div class="h-[38px] bg-white border-b border-[#ccc] flex items-center text-[#666] shrink-0"><div class="w-[31px] h-[36px] border-r border-[#ccc]"></div><div class="w-[101px] h-[36px] border-r border-[#ccc] flex items-center"><span class="fit ml-[12px] w-[74px]">Document</span></div><div class="w-[244px] h-[36px] border-r border-[#ccc] flex items-center"><span class="fit ml-[187px] w-[27px]">Left</span></div><div class="w-[63px] h-[36px] border-r border-[#ccc] flex items-center"><span class="fit ml-[12px] w-[35px]">Term</span></div><span class="fit ml-[13px] w-[38px]">Right</span></div>
      <div class="h-[338px] bg-white border-b border-[#ccc] shrink-0 text-[#888] pt-[15px] pl-[13px]"><span class="fit inline-block w-[147px]">No matching results.</span></div>
      <div class="flex-1 bg-white flex items-center overflow-hidden text-[#444]"><svg class="w-[10px] h-[18px] ml-[11px] text-[#ddd]"><use href="#lt"/></svg><div class="ml-[10px] w-[250px] h-[30px] border border-[#ccc] flex items-center justify-end text-[#aaa]"><svg class="w-[11px] h-[8px]"><use href="#chev"/></svg><b class="ml-[16px] mr-[7px] text-[19px] text-[#999]">?</b></div><span class="ml-[10px] w-[9px]">0</span><span class="fit ml-[12px] w-[53px]">context</span>
        <svg class="w-[64px] h-[22px] ml-[13px]" viewBox="0 0 64 22"><rect x="1" y="6" width="62" height="10" rx="5" fill="#f5f5f5" stroke="#ccc"/><circle cx="11" cy="11" r="9" fill="#f5f5f5" stroke="#bbb"/><circle cx="11" cy="11" r="3.500" fill="#777"/></svg><span class="fit ml-[15px] w-[53px]">expand</span><svg class="w-[62px] h-[22px] ml-[16px]" viewBox="0 0 62 22"><rect x="1" y="6" width="60" height="10" rx="5" fill="#f5f5f5" stroke="#ccc"/><circle cx="14" cy="11" r="9" fill="#f5f5f5" stroke="#bbb"/><circle cx="14" cy="11" r="3.500" fill="#777"/></svg><div class="ml-[10px] w-[54px] h-[30px] border border-r-0 border-[#d8d8d8] bg-[#f5f5f5] rounded-l-[3px] flex items-center pl-[30px] text-[#666] overflow-hidden shrink-0">Scale</div><svg class="w-[10px] h-[18px] ml-[10px] text-[#aaa] shrink-0"><use href="#gt"/></svg></div>
    </div>
  </div>
  <footer class="h-[21px] shrink-0 flex items-center pl-[462px] text-[12.500px] text-[#777]"><div class="fit w-[445px]"><span class="text-[#1a7fc8]">Voyant Tools</span> , <span class="text-[#1a7fc8]">Stéfan Sinclair</span> &amp; <span class="text-[#1a7fc8]">Geoffrey Rockwell</span> (<span class="text-[#1a7fc8]">©</span> 2020) <span class="text-[#1a7fc8]">Privacy</span> v. 2.4 (M51)</div></footer>
</section>
</main>

<!-- ===== taskbar ===== -->
<footer class="h-[51px] bg-[#1c1c1c] flex items-center shrink-0 text-white font-['Open_Sans',sans-serif] border-t border-[#111]">
  <svg class="size-[20px] ml-[19px]" viewBox="0 0 20 20"><path d="M0 3l8-1.200v7.700H0zM9 1.600L20 0v9.500H9zM0 10.500h8v7.700L0 17zM9 10.500h11V20L9 18.400z" fill="#fff"/></svg>
  <div class="ml-[21px] w-[430px] h-[50px] bg-[#333] border border-[#5a5a5a] flex items-center"><svg class="size-[21px] ml-[14px]" viewBox="0 0 21 21"><circle cx="13" cy="8" r="6.500" stroke="#ddd" stroke-width="1.500" fill="none"/><path d="M8.500 13L1.500 20" stroke="#ddd" stroke-width="1.500"/></svg><span class="fit ml-[14px] w-[165px] text-[17.500px] text-[#ccc] leading-[24px]">Search for anything</span></div>
  <svg class="size-[20px] ml-[20px]" viewBox="0 0 20 20"><circle cx="10" cy="10" r="8.500" stroke="#fff" stroke-width="2.200" fill="none"/></svg>
  <svg class="w-[20px] h-[20px] ml-[40px]" viewBox="0 0 20 20"><path d="M1 0v4h12V0M1 20v-4h12v4M1 7h12v6H1zM18 0v3M18 9v11" stroke="#eee" stroke-width="1.500" fill="none"/><path d="M16.500 5h3v3h-3z" fill="#eee"/></svg>
  <div class="ml-[23px] flex h-full">
    <div class="w-[61px] mr-[1px] flex flex-col items-center bg-[#4c4c4c] pt-[9px]"><svg class="size-[30px]" viewBox="0 0 30 30"><circle cx="15" cy="15" r="14" fill="#fbc52d"/><path d="M15 15L3 8A14 14 0 0 1 27.200 8z" fill="#dd4b3e"/><path d="M2.900 8A14 14 0 0 0 13.500 29l6-11-9 0z" fill="#1da462"/><path d="M27.200 8H15v7l5 3-6.500 11A14 14 0 0 0 27.200 8z" fill="#fbc52d"/><circle cx="15" cy="15" r="6.500" fill="#fff"/><circle cx="15" cy="15" r="5.200" fill="#4285f4"/></svg><i class="mt-auto w-full h-[3px] bg-[#b5b5b5]"></i></div>
    <div class="w-[62px] flex flex-col items-center pt-[9px]"><svg class="size-[30px]" viewBox="0 0 30 30"><circle cx="15" cy="15" r="15" fill="#1ed760"/><path d="M6.500 10.500q9-3 17.500 1.500M7.500 15.300q8-2.300 15 1.500M8.500 20q7-1.800 12.500 1.200" stroke="#111" stroke-width="2.500" fill="none" stroke-linecap="round"/></svg><i class="mt-auto w-[51px] h-[3px] bg-[#b5b5b5]"></i></div>
    <div class="w-[62px] flex justify-center pt-[10px]"><svg class="w-[24px] h-[28px]" viewBox="0 0 24 28"><path d="M1 6l14-6v5L7 8v11l-6 3z" fill="#c2303a"/><path d="M15 0l8 3v22l-8 3z" fill="#f06a1d"/><path d="M2 22l5-3 8 1.500V28z" fill="#dc3e15"/></svg></div>
    <div class="w-[62px] flex flex-col items-center pt-[11px]"><svg class="w-[28px] h-[25px]" viewBox="0 0 28 25"><path d="M0 1h10l3 3h-1v5H0z" fill="#dc9c12"/><path d="M0 5h28v18H0z" fill="#fcd462"/><path d="M5 13h18v12h-5v-6h-8v6H5z" fill="#3d9ae0"/></svg><i class="mt-auto w-[51px] h-[3px] bg-[#b5b5b5]"></i></div>
    <div class="w-[62px] flex justify-center pt-[9px]"><div class="w-[26px] h-[29px] bg-black rounded-b-[8px] flex flex-col items-center font-['Roboto',sans-serif] font-bold"><span class="text-[13px] scale-x-75 mt-[3px] tracking-[-.5px]">EPIC</span><span class="text-[6px] mt-[1px]">GAMES</span></div></div>
    <div class="w-[62px] flex justify-center pt-[9px]"><svg class="size-[30px] bg-black" viewBox="0 0 30 30"><g fill="none" stroke="#1789dd" stroke-width="2"><ellipse cx="15" cy="16" rx="10" ry="4" transform="rotate(25 15 16)"/><ellipse cx="15" cy="15" rx="10" ry="4" transform="rotate(85 15 15)"/><ellipse cx="15" cy="15" rx="10" ry="4" transform="rotate(-40 15 15)"/></g></svg></div>
    <div class="w-[62px] flex justify-center pt-[10px]"><svg class="size-[28px]" viewBox="0 0 28 28"><defs><linearGradient id="st" x2="0" y2="1"><stop stop-color="#101a45"/><stop offset="1" stop-color="#1687c2"/></linearGradient></defs><circle cx="14" cy="14" r="14" fill="url(#st)"/><circle cx="18.500" cy="10.500" r="4" stroke="#fff" stroke-width="2" fill="none"/><path d="M1 15l8 3.500 6-5.500 4 2-7 5.500" fill="#fff"/><circle cx="9.500" cy="19.500" r="3.300" fill="#fff"/></svg></div>
    <div class="w-[62px] flex justify-center pt-[9px]"><svg class="size-[30px]" viewBox="0 0 30 30"><circle cx="15" cy="15" r="15" fill="#234f7c"/><path d="M7 15a8 8.500 0 0 1 16 0v4q-1 4-6 5" stroke="#fff" stroke-width="2" fill="none"/><path d="M6 14h3v6H7zM21 14h3v5l-3 1zM15 22h4v3h-4z" fill="#fff"/></svg></div>
    <div class="w-[62px] flex flex-col items-center pt-[11px] relative"><svg class="w-[26px] h-[28px]" viewBox="0 0 26 28"><path d="M3 0h20q2 0 2 2v24l-5-4H3q-2 0-2-2V2q0-2 2-2z" fill="#7289da"/><path d="M6 15q0-6 3-8 4-1 8 0 3 2 3 8-3 2-4 0h-6q-1 2-4 0z" fill="#fff"/></svg><b class="absolute left-[28px] top-[20px] size-[20px] rounded-full bg-[#f05050] text-[12px] leading-[20px] text-center">9+</b><i class="mt-auto w-[51px] h-[3px] bg-[#b5b5b5]"></i></div>
    <div class="w-[62px] flex justify-center pt-[10px]"><div class="w-[26px] h-[28px] bg-[#c9c9c9] text-[#d01f1f] [clip-path:polygon(50%_0,100%_20%,100%_80%,50%_100%,0_80%,0_20%)] text-center font-black text-[22px] leading-[28px]">Z</div></div>
    <div class="w-[62px] flex justify-center pt-[10px]"><svg class="w-[30px] h-[28px]" viewBox="0 0 30 28"><path d="M0 10L15 0l15 10z" fill="#0a61b4"/><path d="M0 9h30v19H0z" fill="#2ea8ee"/><path d="M3 9h24L15 19z" fill="#eef2f5"/><path d="M30 9v19L15 18z" fill="#1187d8"/></svg></div>
    <div class="w-[62px] flex justify-center pt-[9px]"><svg class="size-[30px]" viewBox="0 0 30 30"><rect width="30" height="30" rx="3" fill="#4a4a4a"/><path d="M22 5L8 10v6l7 2.500L8 21v5l14-5v-6l-7-2.500L22 10z" fill="#ff9800"/></svg></div>
    <div class="w-[62px] flex justify-center pt-[11px]"><svg class="w-[28px] h-[28px]" viewBox="0 0 28 28"><path d="M0 0h26v24H0z" fill="#f3f3f3"/><path d="M0 0h26v4H0z" fill="#2a75b8"/><path d="M3 8h12M3 11h9M3 14h7" stroke="#bbb"/><path d="M13 17v-4q0-3 4-3t4 3v4h-5l-3 3q-3-1 0-3z" fill="#3873a8"/><path d="M28 17v5q0 6-6 6t-7-3v-4h8v-6q4-1 5 2z" fill="#ffd43b"/></svg></div>
    <div class="w-[62px] flex justify-center pt-[16px]"><svg class="w-[24px] h-[19px]" viewBox="0 0 24 19"><path d="M5 0h14l5 7-12 12L0 7z" fill="#0aa5f5"/><path d="M0 7h24L12 19z" fill="#0584e8"/><path d="M7 7h10l-5 12z" fill="#22c0ff"/></svg></div>
    <div class="w-[62px] flex flex-col items-center pt-[10px]"><svg class="w-[28px] h-[27px]" viewBox="0 0 28 27"><path d="M7 0h21v27H7z" fill="#21a366"/><path d="M7 9h10v9H7z" fill="#107c41"/><path d="M17 0h11v9H17z" fill="#33c481"/><path d="M7 18h21v9H7z" fill="#185c37"/><rect y="6" width="15" height="15" rx="1" fill="#107c41"/><path d="M4.500 9.500l6 8M10.500 9.500l-6 8" stroke="#fff" stroke-width="2"/></svg><i class="mt-auto w-[51px] h-[3px] bg-[#b5b5b5]"></i></div>
    <div class="w-[62px] flex flex-col items-center pt-[9px]"><div class="size-[30px] rounded-full bg-[#75aadb] font-['Liberation_Serif',serif] text-[21px] leading-[30px] text-center">R</div><i class="mt-auto w-[51px] h-[3px] bg-[#b5b5b5]"></i></div>
  </div>
  <div class="ml-auto flex items-center">
    <svg class="w-[15px] h-[9px]" viewBox="0 0 15 9"><path d="M1 8l6.500-6.500L14 8" stroke="#fff" stroke-width="1.500" fill="none"/></svg>
    <svg class="w-[20px] h-[13px] ml-[13px]" viewBox="0 0 20 13"><path d="M4 12.500a4 4 0 0 1 0-7.500A5.500 5.500 0 0 1 14 4a4.300 4.300 0 0 1 2 8.500z" fill="#ddd"/></svg>
    <svg class="w-[21px] h-[18px] ml-[10px]" viewBox="0 0 21 18"><path d="M6 2h14v10H6M13 12v4M9 16.500h8M1 2h4v4H1zM3 6v10" stroke="#fff" stroke-width="1.400" fill="none"/></svg>
    <svg class="w-[20px] h-[16px] ml-[9px]" viewBox="0 0 20 16"><path d="M1 5.500h3l4-4v13l-4-4H1zM10.500 5.500q2 2.500 0 5M13 3.500q3.500 4.500 0 9" stroke="#fff" stroke-width="1.200" fill="none"/><path d="M16 1.500q4 6.500 0 13" stroke="#777" fill="none"/></svg>
    <span class="fit w-[28px] ml-[14px] text-[15px] leading-[20px]">ENG</span>
    <div class="ml-[16px] w-[76px] flex flex-col items-center text-[15px] leading-[22px] mt-[1px]"><span class="fit w-[51px]">1:52 PM</span><span class="fit w-[76px]">2020-06-15</span></div>
    <svg class="w-[20px] h-[20px] ml-[24px] mr-[31px]" viewBox="0 0 20 20"><path d="M1 1h18v14h-6l-3 3.500V15H1z" stroke="#fff" stroke-width="1.500" fill="none"/></svg>
  </div>
</footer>

<script>
const NS='http://www.w3.org/2000/svg';
function el(p,n,a,t){const e=document.createElementNS(NS,n);for(const k in a)e.setAttribute(k,a[k]);if(t!==undefined)e.textContent=t;p.appendChild(e);return e}

// reader text: [line, width]
const lines=[["Letters from Alexandria in Virginia dated the 9th May",377],["last mention that General Wayne",236],["had been dispatched in the beginning of March on an",383],["expedition against the Cherokee",233],["Miamis and Chickesau Indians who have for some time",397],["past had as their chief warrior",213],["one Macgillivray a Scotchman who has long resided",374],["among these Indians. General Wayne",272],["at the head of two thousand Provincials had completely",397],["routed them after a great slaughter.",253],["After the battle Macgillivray and his savages took refuge",403],["in the woods. General Wayne",213],["has destroyed the most part of the habitation of these",384],["Indians in the extent of 200",195],["English miles along the river which is the boundary of",383],["Georgia after which he returned",228],["to Savannah. This defeat is so total that it will put it out",392],["of the power of these",152],["Indians to be again troublesome to the State of Virginia.",400]];
document.getElementById('reader').innerHTML=lines.map(([t,w])=>`<span class="fit" style="width:${w}px">${t}</span>`).join('');

// phrases table: term, count, length, peak position of the sparkline, label width
const rows=[["general wayne",3,2,29,106],["general de rottenburg",2,3,49,155],["general st clair",2,3,39,106],["general and",2,2,77,86],["general bolivar",2,2,62,107],["general brown",2,2,51,103],["general dearborn",2,2,49,124],["general drummond",3,2,51,137],["general flinter",2,2,107,99],["general harrison",2,2,51,118],["general hewett",2,2,51,107]];
document.getElementById('rows').innerHTML=rows.map(([t,c,l,p,w],i)=>`
<div class="${i?'h-[31px] bg-white border-b border-[#d0d0d0]':'h-[32px] bg-[#c2dcf1] border-b border-[#c2dcf1]'} flex items-center text-[#222]">
<div class="w-[30px] h-full border-r border-[#d0d0d0] flex items-center pl-[6px]"><svg class="size-[17px]" viewBox="0 0 17 17"><path d="M.75.75h15.500v15.500H.75z" fill="#fff" stroke="#aaa" stroke-width="1.500"/>${i?'':'<path d="M3.500 9l4 4 6.500-9" stroke="#999" stroke-width="1.500" fill="none"/>'}</svg></div>
<span class="fit ml-[13px]" style="width:${w}px">${t}</span><span class="ml-auto w-[71px]">${c}</span><span class="w-[76px]">${l}</span>
<svg class="w-[138px] h-[30px]" viewBox="0 0 138 30"><path d="M3 22.500H${p+3}V9V22.500H123" stroke="#3a92d8" stroke-width="1.500" fill="none"/><g fill="#ff8c00"><circle cx="3" cy="22.500" r="2"/><circle cx="${p+3}" cy="9.500" r="2.200"/><circle cx="123" cy="22.500" r="2"/></g></svg></div>`).join('');

// word cloud: "word colour x0 x1 baseline" for level words, "word colour baseline y0 y1" for turned ones
const C={b:'#0000ff',p:'#ff0099',m:'#ff00ff',g:'#2abf2e',dg:'#1c7034',t:'#dfc27d',lt:'#c4af98',s:'#cc8874',te:'#3eb1a4',c:'#00ffff',sk:'#1eaefc',lb:'#b0d0e2',sg:'#a6bfa4',lv:'#c2a5cf',gp:'#7b76ac',pu:'#6f3aa8',v:'#7b35ff',li:'#adff2f',gl:'#8fdc10',o:'#808022',br:'#6b4a0c',w:'#a0146e',pk:'#ffc0c4',st:'#33669c',or:'#ffa500',pt:'#4aa08c'};
const H=`passed st 369 477 163;distance t 629 760 141;want t 631 710 191;majesty's m 754 900 180;plan lb 945 1016 174;called m 675 768 227;india te 779 861 218;price dg 887 965 210;occasion w 861 998 246;killed st 471 561 271;company lt 613 811 261;right p 827 905 281;necessary m 932 1087 280;vessels p 408 517 307;settlers br 801 912 332;force sg 947 1026 332;carried gl 250 361 347;come pk 270 354 375;order gl 443 530 359;money lb 405 518 390;inhabitants pu 807 985 377;quebec g 1015 1127 375;days lt 799 874 419;troops sg 953 1056 414;having b 315 524 446;canada sk 797 990 466;common p 77 217 465;june t 291 361 473;south w 418 632 516;laws lv 157 231 513;given gp 316 404 513;government st 162 644 585;ditto pu 510 620 644;land li 472 652 712;took or 1051 1120 705;good gp 387 573 788;make sk 458 564 826;time sk 588 773 865;present pk 787 1026 861;port o 1041 1107 828;court st 1082 1163 855;america sg 996 1170 895;property lv 1062 1204 923;party lb 199 284 900;say pk 194 246 938;new m 288 567 910;british or 265 445 974;west m 744 838 927;wales or 1020 1127 963;gentlemen o 141 309 1002;best m 190 255 1043;persons w 267 465 1039;bill w 373 425 1075;subject lv 251 361 1106;way g 207 272 1134;lord sk 287 354 1178;long c 297 368 1233;fort lt 286 344 1270;sent g 475 540 1197;miles s 519 639 1262;means lv 499 648 1298;upper dg 501 598 1328;arrived st 620 806 1340;settlement t 245 409 1335;high or 229 302 1375;esq st 312 366 1366;received dg 399 608 1383;colonies st 635 777 1383;following lb 345 555 1430;half s 572 636 1418;large dg 682 767 1418;cape s 779 851 1410;island v 616 711 1454;voyage pu 103 216 1488;lately t 315 403 1509;trade te 575 657 1490;home dg 351 440 1554;brought w 586 713 1530;society pk 648 758 1566;various pu 115 231 1572;hear gp 306 377 1592;sailed m 391 484 1611;information g 168 360 1628;acres lt 619 698 1592;hope gl 780 861 1586;pay v 611 669 1627;power lb 694 797 1620;appears o 390 517 1643;second t 750 861 1652;doubt st 619 716 1676;instant s 768 879 1689;head te 616 693 1743;governor br 859 1078 1017;king sg 1036 1109 1055;young pk 1028 1131 1092;colonial te 1162 1287 1086;ship gp 872 973 1073;near pu 854 924 1104;board t 837 963 1138;passage b 1053 1179 1131;small gp 1021 1108 1179;york b 971 1044 1256;body p 1107 1189 1277;vessel c 856 971 1317;view o 1104 1181 1326;gentleman c 1095 1264 1361;chief gl 844 932 1374;better gp 1127 1218 1403;appeared br 1073 1223 1436;lands lv 1041 1129 1487`;
const V=`individuals lt 262 128 314;certain c 306 194 299;return sg 421 171 270;officers lb 506 116 233;consequence te 578 74 277;houses s 1048 128 241;market p 1114 212 327;london gp 373 270 383;province pu 1169 270 412;years g 549 290 445;emigrants br 612 284 454;just lv 671 303 360;united te 739 276 504;country v 657 372 808;dollars b 163 317 428;capital lt 209 314 417;account t 247 402 525;general br 820 519 795;states p 752 553 773;river p 895 477 602;came g 867 485 568;emigration c 955 500 815;committee m 1009 443 611;army sk 1050 438 517;provisions lb 1092 482 653;americans o 1131 518 679;different s 1165 476 612;person te 1059 561 668;town pu 877 611 755;left w 918 657 711;public pt 1002 652 797;april sk 1228 617 690;house lb 341 600 810;said lt 412 597 717;family or 264 615 716;free or 303 617 679;äithe pk 291 700 805;children pu 217 719 849;water st 255 748 838;produce sk 172 724 857;effect lv 161 872 954;act o 594 740 787;st sg 733 782 807;little pk 911 741 814;sir g 1066 728 768;object w 1130 725 815;immediately br 1189 665 867;day m 851 870 978;äì or 927 903 978;number dg 564 893 1212;people lv 483 923 1170;state o 673 881 1052;great c 668 1058 1304;england p 626 876 1020;war te 536 958 1021;son pk 531 1040 1095;place s 788 962 1152;men pu 737 988 1156;sum sg 1165 965 1031;report gl 1137 957 1055;american g 991 1030 1220;colony t 377 1083 1300;shall sg 424 1190 1335;john lv 435 1104 1172;north pu 628 1116 1206;crew dg 735 1184 1257;man li 765 1163 1285;indians o 822 1165 1340;letter b 876 1157 1262;captain v 926 1145 1291;ago or 961 1156 1210;royal pu 1121 1164 1242;course gl 1065 1220 1325;considerable v 170 1130 1330;natives lt 208 1154 1270;colonel gp 247 1178 1290;short lt 125 1171 1251;population s 1034 1272 1448;purpose c 996 1284 1420;dated v 947 1330 1420;form s 302 1391 1473;far dg 393 1440 1485;islands c 452 1445 1558;side sg 488 1450 1513;late br 528 1455 1513;william b 247 1459 1580;soon sk 736 1450 1523;labour v 771 1443 1546;case br 819 1432 1502;meeting b 863 1400 1528;britain dg 904 1400 1503;passengers b 955 1440 1618;interest w 983 1455 1572;van w 1008 1500 1557;congress or 1034 1529 1669;english sk 1098 1512 1625;work c 880 1539 1625;evening lb 917 1529 1656;ships o 512 1535 1615;australia p 555 1520 1658;james g 402 1671 1765;think pk 437 1671 1752;important gl 501 1671 1829;accounts br 582 1661 1801;expected gp 725 1692 1829`;
const cloud=document.getElementById('cloud');
const ctx=document.createElement('canvas').getContext('2d');ctx.font="100px 'Liberation Serif'";
const size=(w,len)=>len/ctx.measureText(w).width*100;
H.split(';').forEach(s=>{const [w,c,a,b,y]=s.trim().split(' ');el(cloud,'text',{x:a,y,fill:C[c],stroke:C[c],'stroke-width':.5,'font-size':size(w,b-a)},w)});
V.split(';').forEach(s=>{const [w,c,x,a,b]=s.trim().split(' ');el(cloud,'text',{transform:`translate(${x} ${a}) rotate(90)`,fill:C[c],stroke:C[c],'stroke-width':.5,'font-size':size(w,b-a)},w)});

// document skyline under the reader
const hist=document.getElementById('hist');let seed=7;const rnd=()=>(seed=(seed*16807)%2147483647)/2147483647;
const hc=['#e8a8e8','#c8b0f0','#a8c8c0','#c8c0a0','#b8b8c8','#f0b0c0','#a8e8f0','#d8d8d8'];
for(let x=0;x<451;x+=1.7){const base=x<170?3:(x<300?12:6);const h=1+Math.pow(rnd(),3)*base*1.6;el(hist,'rect',{x,y:50-h,width:1.1,height:h,fill:hc[Math.floor(rnd()*8)]})}
[[27,8],[68,9],[95,10],[125,14],[136,13],[154,20],[188,25],[194,40],[210,22],[215,30],[224,18],[235,20],[253,18],[259,31],[262,25],[277,11],[305,15],[315,17],[320,21],[325,33],[344,12],[364,16],[365,22],[383,34],[399,11],[429,13],[437,48]].forEach(([x,h],i)=>el(hist,'rect',{x,y:50-h,width:1.1,height:h,fill:['#a8b8c8','#e8a0e8','#b0a0f0','#98c898','#d8c0a8'][i%5]}));
el(hist,'rect',{x:107,y:0,width:3.500,height:50,fill:'#187dcb'});

// trends chart
const T=document.getElementById('trend');
el(T,'rect',{x:2255.500,y:244.500,width:156,height:24,rx:3,fill:'#fff',stroke:'#ccc'});
el(T,'circle',{cx:2273.500,cy:256.500,r:6.500,fill:'#00f'});
el(T,'text',{x:2285,y:262,'font-size':16,fill:'#444',textLength:117},'"general wayne"');
for(let i=0;i<12;i++){const y=287.500+i*42.640;el(T,'text',{x:2141,y:y+4,'font-size':12.500,fill:'#333',textLength:31},(0.022-i*0.002).toFixed(3));el(T,'path',{d:`M2173 ${y}h6`,stroke:'#222','stroke-width':1.500})}
el(T,'path',{d:'M2178.500 287V761',stroke:'#222','stroke-width':1.500});
[[2263,586,6],[2266.500,312,3],[2312,433,2.700]].forEach(([x,y,w])=>el(T,'rect',{x,y,width:w,height:756-y,fill:'#0000c8'}));
el(T,'rect',{x:2179,y:755,width:369,height:6.500,fill:'#000'});
for(let i=1;i<=11;i++)el(T,'path',{d:`M${2178.500+i*33.200} 756v5`,stroke:'#999'});
['1)1789.0…','38)1789.0…','75)1790.0…','112)1792.0…','149)1814.0…','186)1819.0…','223)1821.0…','259)1829.0…','296)1835.0…','333)1839.0…'].forEach((t,i)=>el(T,'text',{transform:`translate(${2210+i*38.600} 779) rotate(-27)`,'text-anchor':'end','font-size':13,fill:'#444'},t));
el(T,'text',{x:2293,y:830,'font-size':15.500,fill:'#333',textLength:140},'Corpus (Documents)');
el(T,'text',{transform:'translate(2137 594) rotate(-90)','font-size':14.500,fill:'#222',textLength:142},'Relative Frequencies');

// spread each marked label over the width of its box, once the styles and fonts are in
function spread(){document.querySelectorAll('.fit').forEach(e=>{e.style.letterSpacing='0px';e.style.flexShrink=0;const r=document.createRange();r.selectNodeContents(e);const n=r.getBoundingClientRect().width,k=e.textContent.length-1,w=parseFloat(getComputedStyle(e).width);if(w>0&&n>0)e.style.letterSpacing=(w-n)/k+'px'})}
spread();
addEventListener('load',spread);
document.fonts.ready.then(spread);
[30,120,300].forEach(t=>setTimeout(spread,t));
</script>
</body>
</html>
